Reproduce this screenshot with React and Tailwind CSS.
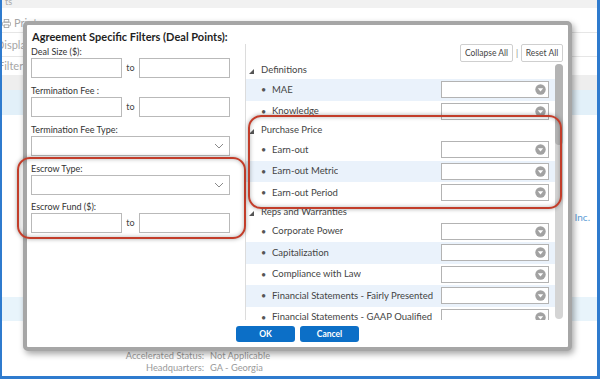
import React from "react";

const LEFT_FIELDS = [
  { label: "Deal Size ($):", type: "range", mt: "mt-[2px]" },
  { label: "Termination Fee :", type: "range", mt: "mt-[7px]" },
  { label: "Termination Fee Type:", type: "select", mt: "mt-[7px]" },
  { label: "Escrow Type:", type: "select", mt: "mt-[7px]" },
  { label: "Escrow Fund ($):", type: "range", mt: "mt-[6px]" },
];

const TREE = [
  { head: "Definitions" },
  { item: "MAE", alt: true },
  { item: "Knowledge" },
  { head: "Purchase Price" },
  { item: "Earn-out" },
  { item: "Earn-out Metric", alt: true },
  { item: "Earn-out Period" },
  { head: "Reps and Warranties" },
  { item: "Corporate Power" },
  { item: "Capitalization", alt: true },
  { item: "Compliance with Law" },
  { item: "Financial Statements - Fairly Presented", alt: true },
  { item: "Financial Statements - GAAP Qualified" },
];

const Chevron = () => (
  <svg width="10" height="6" viewBox="0 0 10 6">
    <polyline points="1,1 5,5 9,1" fill="none" stroke="#8a8a8a" strokeWidth="1" />
  </svg>
);

const RoundDown = () => (
  <svg width="11" height="11" viewBox="0 0 11 11">
    <circle cx="5.5" cy="5.5" r="5.2" fill="#a2a2a2" />
    <polygon points="2.8,4.2 8.2,4.2 5.5,7.4" fill="#fff" />
  </svg>
);

const Printer = () => (
  <svg width="9" height="9" viewBox="0 0 10 10" fill="none" stroke="#a8a8a8" strokeWidth="1">
    <rect x="2.5" y="0.5" width="5" height="3" />
    <rect x="0.5" y="3.5" width="9" height="4" rx="1" />
    <rect x="2.5" y="6.5" width="5" height="3" fill="#fff" />
  </svg>
);

function TextBox() {
  return <div className="w-[91px] h-[20px] border border-[#b9b9b9] bg-white" />;
}

function Field({ label, type, mt }) {
  return (
    <div className={mt}>
      <div className="h-[12px] leading-[12px] text-[9px] text-[#333]">{label}</div>
      {type === "range" ? (
        <div className="flex items-center">
          <TextBox />
          <span className="w-[17px] text-center text-[9px] text-[#444]">to</span>
          <TextBox />
        </div>
      ) : (
        <div className="w-[199px] h-[20px] border border-[#b9b9b9] flex items-center justify-end pr-[5px]">
          <Chevron />
        </div>
      )}
    </div>
  );
}

function TreeRow({ row }) {
  if (row.head) {
    return (
      <div className="h-[17px] flex items-center pl-[3px] text-[9.5px] text-[#444]">
        <svg width="5" height="5" viewBox="0 0 5 5" className="mr-[7px] mt-[2px]">
          <polygon points="5,0 5,5 0,5" fill="#555" />
        </svg>
        {row.head}
      </div>
    );
  }
  return (
    <div className={`h-[21.5px] flex items-center pl-[15px] text-[9.5px] text-[#444] ${row.alt ? "bg-[#eaf2fb]" : "bg-white"}`}>
      <span className="w-[11px] shrink-0 text-[9px] text-[#555]">•</span>
      <span className="whitespace-nowrap overflow-hidden">{row.item}</span>
      <div className="ml-auto mr-[6px] w-[108px] h-[17px] shrink-0 border border-[#b3b3b3] bg-white flex items-center justify-end pr-[2px]">
        <RoundDown />
      </div>
    </div>
  );
}

export default function App() {
  return (
    <div className="relative w-[600px] h-[379px] overflow-hidden bg-white border-l-2 border-r-[3px] border-b-[3px] border-[#2f7bce] font-['Lato',sans-serif] flex flex-col">

      {/* background page */}
      <div className="h-[8px] shrink-0 bg-[#f1f1f1] text-[9px] leading-[4px] text-[#aaa] pl-[3px]">ts</div>
      <div className="h-[25px] shrink-0 border-b border-[#e6e6e6] flex items-center gap-[3px] pt-[6px] text-[11px] text-[#a6a6a6]">
        <Printer />
        <span>Print</span>
      </div>
      <div className="h-[24px] shrink-0 border-b border-[#e6e6e6] flex items-center pt-[2px] text-[11px] text-[#a6a6a6] -ml-[6px]">Display</div>
      <div className="h-[18px] shrink-0 flex items-center pt-[1px] text-[11px] text-[#a6a6a6] -ml-[4px]">Filters</div>
      <div className="h-[15px] shrink-0 bg-[#eeeeee]" />
      <div className="h-[25px] shrink-0 bg-[#e2f0f9]" />
      <div className="h-[95px] shrink-0" />
      <div className="h-[14px] shrink-0 flex items-center justify-end pr-[7px] text-[10px] text-[#5b9bd5]">, Inc.</div>
      <div className="h-[73px] shrink-0" />
      <div className="h-[24px] shrink-0 bg-[#e8f4fb]" />
      <div className="h-[29px] shrink-0" />
      {[
        ["Accelerated Status:", "Not Applicable"],
        ["Headquarters:", "GA - Georgia"],
        ["State of Incorporation:", "GA - Georgia"],
      ].map(([k, v]) => (
        <div key={k} className="h-[12px] shrink-0 flex items-center text-[9.3px] text-[#9a9a9a] leading-[12px]">
          <span className="w-[202px] text-right">{k}</span>
          <span className="ml-[6px]">{v}</span>
        </div>
      ))}

      {/* dialog */}
      <div className="absolute left-[21px] top-[21px] w-[549px] h-[330px] border-4 border-[#a6a6a6] rounded-[5px] bg-white shadow-[2px_3px_6px_rgba(0,0,0,0.35)] flex flex-col">
        <div className="flex h-[295px]">
          <div className="w-[218px] pl-[4px]">
            <div className="mt-[5px] h-[14px] leading-[14px] pl-[1px] text-[11px] font-bold text-[#1f1f1f] whitespace-nowrap">
              Agreement Specific Filters (Deal Points):
            </div>
            {LEFT_FIELDS.map((f) => (
              <Field key={f.label} {...f} />
            ))}
          </div>

          <div className="mt-[19px] h-[276px] w-[323px] border-l border-[#dcdcdc] flex flex-col">
            <div className="h-[18px] flex items-center justify-end pr-[5px] text-[8.5px] text-[#444]">
              <div className="w-[53px] h-[18px] border border-[#cfcfcf] rounded-[2px] flex items-center justify-center">Collapse All</div>
              <span className="w-[8px] text-center text-[#888]">|</span>
              <div className="w-[42px] h-[18px] border border-[#cfcfcf] rounded-[2px] flex items-center justify-center">Reset All</div>
            </div>
            <div className="flex flex-1 min-h-0">
              <div className="w-[309px] overflow-hidden">
                {TREE.map((r, i) => (
                  <TreeRow key={i} row={r} />
                ))}
              </div>
              <div className="w-[8px] mt-[2px] mb-[1px] rounded-full bg-[#d4d4d4] flex flex-col">
                <div className="h-[81px] rounded-full bg-[#b4b4b4]" />
              </div>
            </div>
          </div>
        </div>

        <div className="flex justify-center gap-[5px] pt-[6px]">
          <button className="w-[59px] h-[16px] rounded-[3px] bg-[#0c6fc7] text-white text-[8.5px] font-bold">OK</button>
          <button className="w-[59px] h-[16px] rounded-[3px] bg-[#0c6fc7] text-white text-[8.5px] font-bold">Cancel</button>
        </div>
      </div>

      {/* callout outlines */}
      <div className="absolute left-[15px] top-[157px] w-[229px] h-[82px] rounded-[13px] border-[2.5px] border-[#c23d2a] shadow-[0_0_4px_rgba(0,0,0,0.35),inset_0_0_4px_rgba(0,0,0,0.3)]" />
      <div className="absolute left-[246px] top-[115px] w-[314px] h-[94px] rounded-[13px] border-[2.5px] border-[#c23d2a] shadow-[0_0_4px_rgba(0,0,0,0.35),inset_0_0_4px_rgba(0,0,0,0.3)]" />
    </div>
  );
}
